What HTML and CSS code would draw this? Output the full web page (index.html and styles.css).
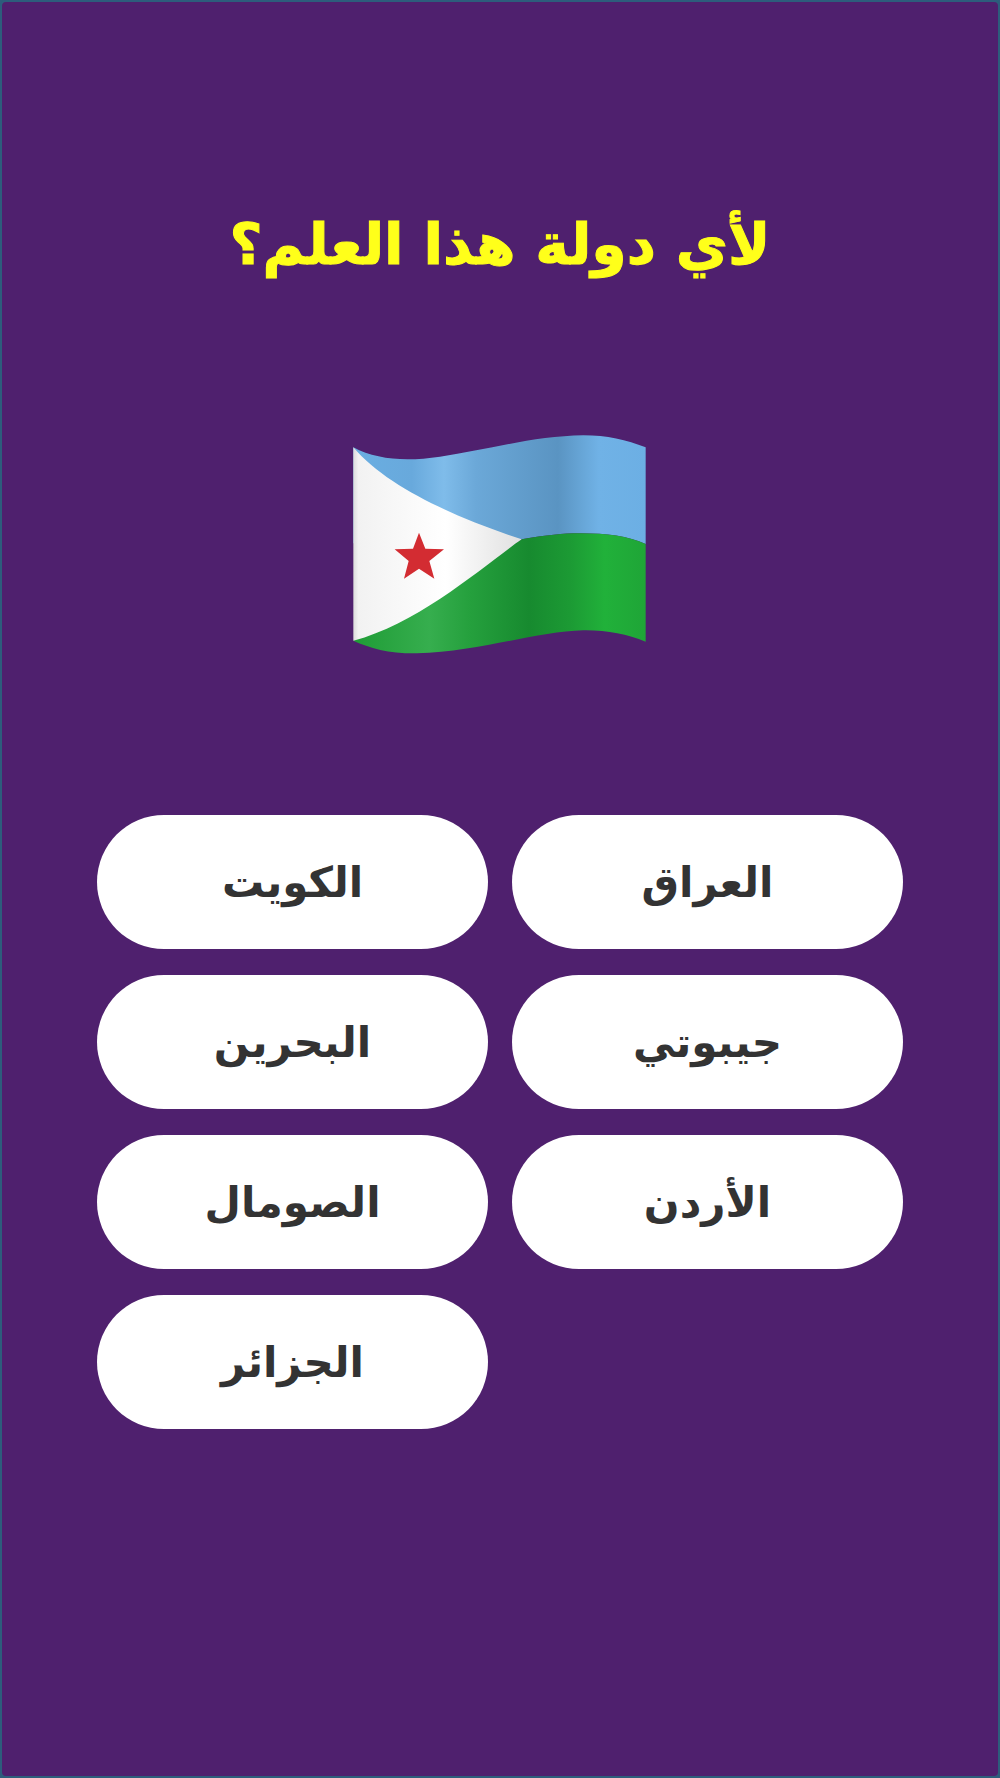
FILE: index.html
```html
<!DOCTYPE html>
<html lang="ar" dir="rtl">
<head>
    <meta charset="UTF-8">
    <meta name="viewport" content="width=device-width, initial-scale=1.0">
    <title>لأي دولة هذا العلم؟</title>
    <link rel="stylesheet" href="styles.css">
</head>
<body>
    <main class="screen">
        <h1 class="question">لأي دولة هذا العلم؟</h1>
        <svg class="flag" viewBox="0 0 1080 810" role="img" aria-label="علم">
            <defs>
                <linearGradient id="blue" gradientUnits="userSpaceOnUse" x1="100" y1="0" x2="977" y2="0">
                    <stop offset="0" stop-color="#6aaee2"/>
                    <stop offset="0.2" stop-color="#68a9dc"/>
                    <stop offset="0.31" stop-color="#7fbcea"/>
                    <stop offset="0.42" stop-color="#6ba8d8"/>
                    <stop offset="0.7" stop-color="#5a94c2"/>
                    <stop offset="0.84" stop-color="#70b2e6"/>
                    <stop offset="1" stop-color="#6cafe4"/>
                </linearGradient>
                <linearGradient id="green" gradientUnits="userSpaceOnUse" x1="100" y1="0" x2="977" y2="0">
                    <stop offset="0" stop-color="#1f9c36"/>
                    <stop offset="0.26" stop-color="#36ae4e"/>
                    <stop offset="0.4" stop-color="#25a03d"/>
                    <stop offset="0.6" stop-color="#178a2f"/>
                    <stop offset="0.74" stop-color="#1c9a34"/>
                    <stop offset="0.86" stop-color="#21b13a"/>
                    <stop offset="1" stop-color="#1fa537"/>
                </linearGradient>
                <linearGradient id="white" gradientUnits="userSpaceOnUse" x1="100" y1="0" x2="605" y2="0">
                    <stop offset="0" stop-color="#dcdcdc"/>
                    <stop offset="0.03" stop-color="#f2f2f2"/>
                    <stop offset="0.55" stop-color="#ffffff"/>
                    <stop offset="1" stop-color="#e0e0e0"/>
                </linearGradient>
            </defs>
            <path fill="url(#blue)" d="M100 112 C170 150 260 155 360 140 C500 120 640 78 790 76 C860 76 920 90 977 112 L977 402 C920 375 840 368 760 370 C710 372 650 380 605 388 L100 400 Z"/>
            <path fill="url(#green)" d="M605 388 C650 380 710 372 760 370 C840 368 920 375 977 402 L977 695 C920 672 860 660 790 661 C650 664 480 725 290 730 C210 731 150 715 100 692 Z"/>
            <path fill="url(#white)" d="M100 112 C200 230 400 320 605 388 C500 460 300 640 100 692 Z"/>
            <polygon fill="#d32c32" points="297,368 316,416 372,418 328,453 343,506 297,476 252,506 266,453 224,418 279,416"/>
        </svg>
        <div class="answers">
            <button class="answer">العراق</button>
            <button class="answer">الكويت</button>
            <button class="answer">جيبوتي</button>
            <button class="answer">البحرين</button>
            <button class="answer">الأردن</button>
            <button class="answer">الصومال</button>
            <button class="answer answer-last">الجزائر</button>
        </div>
    </main>
</body>
</html>
```

FILE: styles.css
```css
* {
    box-sizing: border-box;
}
body {
    margin: 0;
    background-color: #2d5d7c;
}
.screen {
    height: 1778px;
    padding-top: 202px;
    background-color: #4f206e;
    border: 2px solid #2d5d7c;
    border-radius: 6px;
    font-family: "DejaVu Sans", sans-serif;
}
.question {
    margin: 0;
    height: 80px;
    line-height: 80px;
    font-size: 57px;
    font-weight: bold;
    text-align: center;
    color: #ffff1a;
    -webkit-text-stroke: 1px #ffff1a;
}
.flag {
    display: block;
    width: 360px;
    height: 270px;
    margin: 126px auto 0;
}
.answers {
    display: grid;
    grid-template-columns: 391px 391px;
    grid-auto-rows: 134px;
    gap: 26px 24px;
    justify-content: center;
    margin-top: 135px;
}
.answer {
    padding: 0;
    border: none;
    border-radius: 67px;
    background-color: #ffffff;
    color: #333333;
    font-family: "DejaVu Sans", sans-serif;
    font-size: 42px;
    font-weight: bold;
}
.answer-last {
    grid-column: 2;
}
```
